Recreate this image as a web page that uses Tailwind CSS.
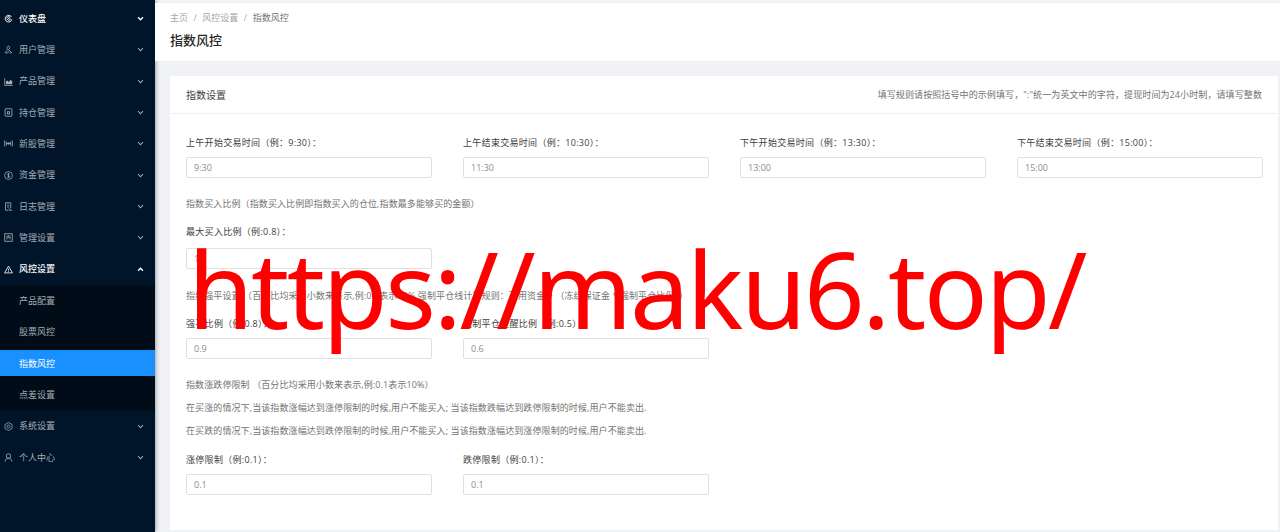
<!DOCTYPE html>
<html lang="zh">
<head>
<meta charset="utf-8">
<title>指数风控</title>
<script src="https://cdn.jsdelivr.net/npm/@tailwindcss/browser@4"></script>
</head>
<body class="relative h-[532px] w-[1280px] overflow-hidden bg-[#f0f2f5] font-['Open_Sans','Noto_Sans_CJK_SC',sans-serif] text-[9px] text-[#595959]">
<div class="flex h-full">
  <!-- 侧边栏 -->
  <aside class="w-[155px] shrink-0 bg-[#001529] pt-[3px] text-[9px] text-[#a6adb4] shadow-[1px_0_4px_rgba(0,21,41,0.35)]">
    <div class="flex h-[31.3px] items-center pl-[4px] pr-[11px] text-white">
      <svg class="mr-[6px] h-[9px] w-[9px]" viewBox="0 0 24 24" fill="none" stroke="currentColor" stroke-width="2.4"><path d="M20 8a9 9 0 1 0 1 6"/><path d="M7 12a5 5 0 0 1 9-3l-9 7"/><path d="M17 12a5 5 0 0 1-6 5"/></svg>
      <span class="flex-1 font-medium">仪表盘</span>
      <svg class="h-[7px] w-[7px]" viewBox="0 0 10 10" fill="none" stroke="currentColor" stroke-width="2"><path d="M1.5 3.2 5 6.8l3.5-3.6"/></svg>
    </div>
    <div class="flex h-[31.3px] items-center pl-[4px] pr-[11px]">
      <svg class="mr-[6px] h-[9px] w-[9px]" viewBox="0 0 24 24" fill="none" stroke="currentColor" stroke-width="2"><path d="M12 2 7 8l4 5 5-5z"/><path d="M9 12 3 21h7l3-5M13 13l8 8h-6"/></svg>
      <span class="flex-1">用户管理</span>
      <svg class="h-[7px] w-[7px]" viewBox="0 0 10 10" fill="none" stroke="currentColor" stroke-width="1.5"><path d="M1.5 3.2 5 6.8l3.5-3.6"/></svg>
    </div>
    <div class="flex h-[31.3px] items-center pl-[4px] pr-[11px]">
      <svg class="mr-[6px] h-[9px] w-[9px]" viewBox="0 0 24 24" fill="currentColor"><path d="M1 3h2v18h20v2H1z"/><path d="M5 19v-7l4-3 4 4 4-6 5 4v8z"/></svg>
      <span class="flex-1">产品管理</span>
      <svg class="h-[7px] w-[7px]" viewBox="0 0 10 10" fill="none" stroke="currentColor" stroke-width="1.5"><path d="M1.5 3.2 5 6.8l3.5-3.6"/></svg>
    </div>
    <div class="flex h-[31.3px] items-center pl-[4px] pr-[11px]">
      <svg class="mr-[6px] h-[9px] w-[9px]" viewBox="0 0 24 24" fill="none" stroke="currentColor" stroke-width="2.2"><rect x="3" y="2" width="18" height="20" rx="1"/><rect x="9" y="10" width="6" height="6"/></svg>
      <span class="flex-1">持仓管理</span>
      <svg class="h-[7px] w-[7px]" viewBox="0 0 10 10" fill="none" stroke="currentColor" stroke-width="1.5"><path d="M1.5 3.2 5 6.8l3.5-3.6"/></svg>
    </div>
    <div class="flex h-[31.3px] items-center pl-[4px] pr-[11px]">
      <svg class="mr-[6px] h-[9px] w-[9px]" viewBox="0 0 24 24" fill="none" stroke="currentColor" stroke-width="2.4"><path d="M2 4v16M7 7v10M12 9v6M17 7v10M22 4v16M7 12h10"/></svg>
      <span class="flex-1">新股管理</span>
      <svg class="h-[7px] w-[7px]" viewBox="0 0 10 10" fill="none" stroke="currentColor" stroke-width="1.5"><path d="M1.5 3.2 5 6.8l3.5-3.6"/></svg>
    </div>
    <div class="flex h-[31.3px] items-center pl-[4px] pr-[11px]">
      <svg class="mr-[6px] h-[9px] w-[9px]" viewBox="0 0 24 24" fill="none" stroke="currentColor" stroke-width="2"><circle cx="12" cy="12" r="10.5"/><path d="M15.5 8.5C14.5 7 9 6.500 9 9.500s6 2 6 5-5.500 2.500-6.500 1M12 5v14"/></svg>
      <span class="flex-1">资金管理</span>
      <svg class="h-[7px] w-[7px]" viewBox="0 0 10 10" fill="none" stroke="currentColor" stroke-width="1.5"><path d="M1.5 3.2 5 6.8l3.5-3.6"/></svg>
    </div>
    <div class="flex h-[31.3px] items-center pl-[4px] pr-[11px]">
      <svg class="mr-[6px] h-[9px] w-[9px]" viewBox="0 0 24 24" fill="none" stroke="currentColor" stroke-width="2.2"><path d="M18 17V2H4v20h7"/><path d="M8 8h6M8 13h6M14 17v5h8"/></svg>
      <span class="flex-1">日志管理</span>
      <svg class="h-[7px] w-[7px]" viewBox="0 0 10 10" fill="none" stroke="currentColor" stroke-width="1.5"><path d="M1.5 3.2 5 6.8l3.5-3.6"/></svg>
    </div>
    <div class="flex h-[31.3px] items-center pl-[4px] pr-[11px]">
      <svg class="mr-[6px] h-[9px] w-[9px]" viewBox="0 0 24 24" fill="none" stroke="currentColor" stroke-width="2.2"><rect x="2" y="2" width="20" height="20"/><path d="M8 7v10M14 7h-3v5h3M16 7v10"/></svg>
      <span class="flex-1">管理设置</span>
      <svg class="h-[7px] w-[7px]" viewBox="0 0 10 10" fill="none" stroke="currentColor" stroke-width="1.5"><path d="M1.5 3.2 5 6.8l3.5-3.6"/></svg>
    </div>
    <div class="flex h-[31.3px] items-center pl-[4px] pr-[11px] text-white">
      <svg class="mr-[6px] h-[9px] w-[9px]" viewBox="0 0 24 24" fill="none" stroke="currentColor" stroke-width="2.2"><path d="M12 3 1.500 21h21z"/><path d="M12 10v5M12 17v2"/></svg>
      <span class="flex-1 font-medium">风控设置</span>
      <svg class="h-[7px] w-[7px]" viewBox="0 0 10 10" fill="none" stroke="currentColor" stroke-width="2"><path d="M1.5 6.800 5 3.200l3.500 3.600"/></svg>
    </div>
    <div class="bg-[#000c17] pt-[3px] pb-[3px]">
      <div class="flex h-[26px] items-center pl-[19px] mb-[5.300px]">产品配置</div>
      <div class="flex h-[26px] items-center pl-[19px] mb-[5.300px]">股票风控</div>
      <div class="flex h-[26px] items-center bg-[#1890ff] pl-[19px] mb-[5.300px] text-white">指数风控</div>
      <div class="flex h-[26px] items-center pl-[19px]">点差设置</div>
    </div>
    <div class="flex h-[31.3px] items-center pl-[4px] pr-[11px]">
      <svg class="mr-[6px] h-[9px] w-[9px]" viewBox="0 0 24 24" fill="none" stroke="currentColor" stroke-width="2"><path d="m12 1.500 9.500 5.200v10.600L12 22.500l-9.500-5.200V6.700z"/><circle cx="12" cy="12" r="4"/></svg>
      <span class="flex-1">系统设置</span>
      <svg class="h-[7px] w-[7px]" viewBox="0 0 10 10" fill="none" stroke="currentColor" stroke-width="1.5"><path d="M1.5 3.2 5 6.8l3.5-3.6"/></svg>
    </div>
    <div class="flex h-[31.3px] items-center pl-[4px] pr-[11px]">
      <svg class="mr-[6px] h-[9px] w-[9px]" viewBox="0 0 24 24" fill="none" stroke="currentColor" stroke-width="2.2"><circle cx="12" cy="8" r="6"/><path d="M3 23c0-6 4-9 9-9s9 3 9 9"/></svg>
      <span class="flex-1">个人中心</span>
      <svg class="h-[7px] w-[7px]" viewBox="0 0 10 10" fill="none" stroke="currentColor" stroke-width="1.5"><path d="M1.5 3.2 5 6.8l3.5-3.6"/></svg>
    </div>
  </aside>

  <main class="min-w-0 flex-1">
    <!-- 页头 -->
    <div class="mt-[3px] h-[58px] bg-white pl-[15px] pt-[9px]">
      <div class="flex gap-[5.500px] leading-[12px] text-[#a6a6a6]">
        <span>主页</span><span>/</span><span>风控设置</span><span>/</span><span class="text-[#737373]">指数风控</span>
      </div>
      <h1 class="mt-[7px] text-[13px] leading-[18px] font-medium text-[#262626]">指数风控</h1>
    </div>

    <!-- 卡片 -->
    <section class="ml-[15px] mr-[2px] mt-[15px] h-[454px] bg-white">
      <div class="flex h-[38px] items-center justify-between border-b border-[#f0f0f0] pl-[16px] pr-[16px] pt-[1px]">
        <span class="text-[10px] text-[#404040]">指数设置</span>
        <span class="tracking-[0.1px] text-[#737373]">填写规则请按照括号中的示例填写，":"统一为英文中的字符，提现时间为24小时制，请填写整数</span>
      </div>
      <div class="pl-[16px] pr-[15px] pt-[22px]">
        <div class="grid grid-cols-4 gap-x-[31px]">
          <div>
            <label class="block leading-[13px] tracking-[0.3px] text-[#404040]">上午开始交易时间（例：9:30）：</label>
            <input value="9:30" class="mt-[8px] block h-[21px] w-full rounded-[2px] border border-[#e0e0e0] px-[7px] text-[9px] text-[#8c8c8c]">
          </div>
          <div>
            <label class="block leading-[13px] tracking-[0.3px] text-[#404040]">上午结束交易时间（例：10:30）：</label>
            <input value="11:30" class="mt-[8px] block h-[21px] w-full rounded-[2px] border border-[#e0e0e0] px-[7px] text-[9px] text-[#8c8c8c]">
          </div>
          <div>
            <label class="block leading-[13px] tracking-[0.3px] text-[#404040]">下午开始交易时间（例：13:30）：</label>
            <input value="13:00" class="mt-[8px] block h-[21px] w-full rounded-[2px] border border-[#e0e0e0] px-[7px] text-[9px] text-[#8c8c8c]">
          </div>
          <div>
            <label class="block leading-[13px] tracking-[0.3px] text-[#404040]">下午结束交易时间（例：15:00）：</label>
            <input value="15:00" class="mt-[8px] block h-[21px] w-full rounded-[2px] border border-[#e0e0e0] px-[7px] text-[9px] text-[#8c8c8c]">
          </div>
        </div>

        <p class="mt-[19px] leading-[13px] tracking-[0.1px] text-[#737373]">指数买入比例（指数买入比例即指数买入的仓位,指数最多能够买的金额）</p>
        <div class="mt-[15px] w-[246px]">
          <label class="block leading-[13px] tracking-[0.3px] text-[#404040]">最大买入比例（例:0.8）：</label>
          <input value="1" class="mt-[10px] block h-[21px] w-full rounded-[2px] border border-[#e0e0e0] px-[7px] text-[9px] text-[#8c8c8c]">
        </div>

        <p class="mt-[20px] leading-[13px] tracking-[0.1px] text-[#737373]">指数强平设置 （百分比均采用小数来表示,例:0.8表示80% 强制平仓线计算规则：可用资金 + （冻结保证金 * 强制平仓比例））</p>
        <div class="mt-[15px] grid w-[523px] grid-cols-2 gap-x-[31px]">
          <div>
            <label class="block leading-[13px] tracking-[0.3px] text-[#404040]">强平比例（例:0.8）：</label>
            <input value="0.9" class="mt-[8px] block h-[21px] w-full rounded-[2px] border border-[#e0e0e0] px-[7px] text-[9px] text-[#8c8c8c]">
          </div>
          <div>
            <label class="block leading-[13px] tracking-[0.3px] text-[#404040]">强制平仓提醒比例（例:0.5）：</label>
            <input value="0.6" class="mt-[8px] block h-[21px] w-full rounded-[2px] border border-[#e0e0e0] px-[7px] text-[9px] text-[#8c8c8c]">
          </div>
        </div>

        <p class="mt-[19px] leading-[13px] tracking-[0.1px] text-[#737373]">指数涨跌停限制 （百分比均采用小数来表示,例:0.1表示10%）</p>
        <p class="mt-[10px] leading-[13px] tracking-[0.1px] text-[#737373]">在买涨的情况下,当该指数涨幅达到涨停限制的时候,用户不能买入; 当该指数跌幅达到跌停限制的时候,用户不能卖出.</p>
        <p class="mt-[10px] leading-[13px] tracking-[0.1px] text-[#737373]">在买跌的情况下,当该指数涨幅达到跌停限制的时候,用户不能买入; 当该指数涨幅达到涨停限制的时候,用户不能卖出.</p>
        <div class="mt-[16px] grid w-[523px] grid-cols-2 gap-x-[31px]">
          <div>
            <label class="block leading-[13px] tracking-[0.3px] text-[#404040]">涨停限制（例:0.1）：</label>
            <input value="0.1" class="mt-[8px] block h-[21px] w-full rounded-[2px] border border-[#e0e0e0] px-[7px] text-[9px] text-[#8c8c8c]">
          </div>
          <div>
            <label class="block leading-[13px] tracking-[0.3px] text-[#404040]">跌停限制（例:0.1）：</label>
            <input value="0.1" class="mt-[8px] block h-[21px] w-full rounded-[2px] border border-[#e0e0e0] px-[7px] text-[9px] text-[#8c8c8c]">
          </div>
        </div>
      </div>
    </section>
  </main>
</div>

<!-- 水印 -->
<div class="absolute left-[188px] top-[216px] font-['Noto_Sans',sans-serif] text-[106px] leading-[144px] tracking-[-2.5px] whitespace-nowrap text-[#ff0000]">https://maku6.top/</div>
</body>
</html>
